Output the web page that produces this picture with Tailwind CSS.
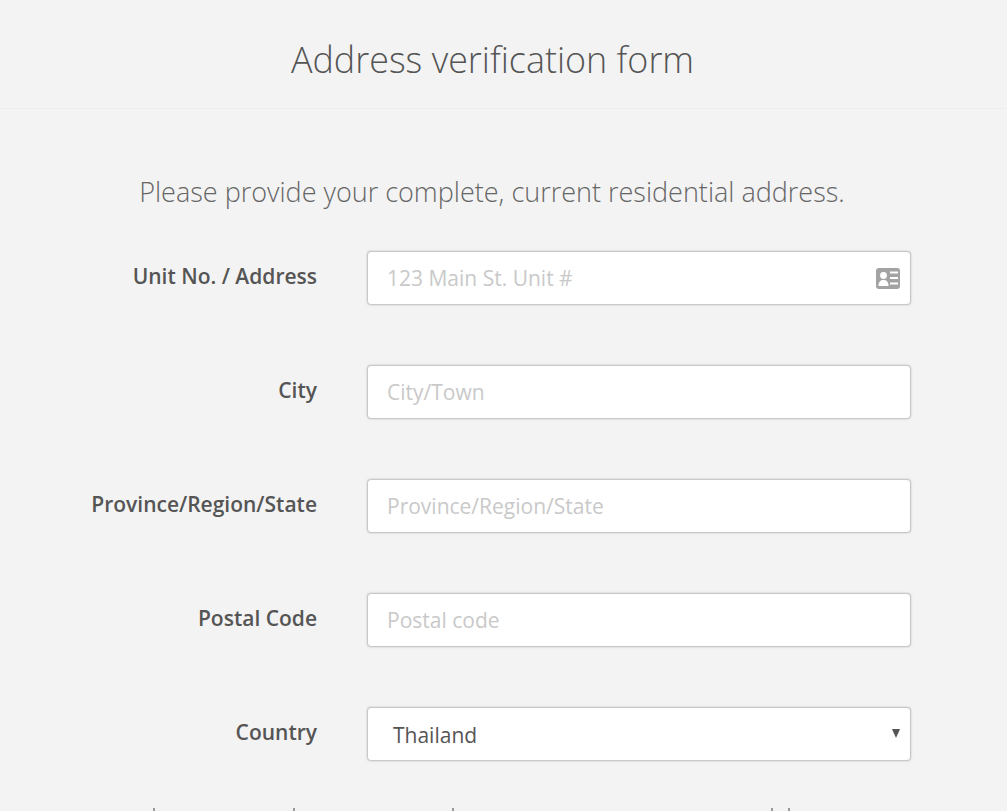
<!DOCTYPE html>
<html lang="en">
  <head>
    <meta charset="UTF-8" />
    <title>Address verification form</title>
    <script src="https://cdn.jsdelivr.net/npm/@tailwindcss/browser@4"></script>
  </head>
  <body class="bg-[#f3f3f3] font-['Open_Sans',sans-serif] text-[#555] h-[811px] overflow-hidden">
    <!-- header -->
    <div class="h-[109px] border-b border-[#eeeeee] flex items-center justify-center pt-[12px] pr-[22px]">
      <h1 class="text-[35.9px] font-light leading-none text-[#555]">Address verification form</h1>
    </div>

    <p class="mt-[66px] pr-[23px] text-center text-[27px] leading-[34px] font-light text-[#666]">
      Please provide your complete, current residential address.
    </p>

    <form class="mt-[42px] flex flex-col gap-[60px]">
      <div class="flex items-center">
        <label class="w-[317px] text-right text-[21px] font-semibold pb-[3px]">Unit No. / Address</label>
        <div class="relative ml-[50px]">
          <input
            type="text"
            placeholder="123 Main St. Unit #"
            class="block w-[544px] h-[54px] bg-white border border-[#c8c8c8] rounded-[4px] shadow-[0_0_2px_#bbb] px-[19px] text-[21px] placeholder:text-[#c9c9c9]"
          />
          <svg class="absolute right-[11px] top-[17px]" width="24" height="21" viewBox="0 0 24 21">
            <rect width="24" height="21" rx="3" fill="#a3a3a3" />
            <circle cx="7.500" cy="7.500" r="3.400" fill="#fff" />
            <path d="M2.500 18c0-4.200 2-6 5-6s5 1.800 5 6z" fill="#fff" />
            <path d="M14 4.500h8M14 10h8M14 15.500h8" stroke="#fff" stroke-width="2" />
          </svg>
        </div>
      </div>

      <div class="flex items-center">
        <label class="w-[317px] text-right text-[21px] font-semibold pb-[3px]">City</label>
        <input
          type="text"
          placeholder="City/Town"
          class="ml-[50px] w-[544px] h-[54px] bg-white border border-[#c8c8c8] rounded-[4px] shadow-[0_0_2px_#bbb] px-[19px] text-[21px] placeholder:text-[#c9c9c9]"
        />
      </div>

      <div class="flex items-center">
        <label class="w-[317px] text-right text-[21px] font-semibold pb-[3px]">Province/Region/State</label>
        <input
          type="text"
          placeholder="Province/Region/State"
          class="ml-[50px] w-[544px] h-[54px] bg-white border border-[#c8c8c8] rounded-[4px] shadow-[0_0_2px_#bbb] px-[19px] text-[21px] placeholder:text-[#c9c9c9]"
        />
      </div>

      <div class="flex items-center">
        <label class="w-[317px] text-right text-[21px] font-semibold pb-[3px]">Postal Code</label>
        <input
          type="text"
          placeholder="Postal code"
          class="ml-[50px] w-[544px] h-[54px] bg-white border border-[#c8c8c8] rounded-[4px] shadow-[0_0_2px_#bbb] px-[19px] text-[21px] placeholder:text-[#c9c9c9]"
        />
      </div>

      <div class="flex items-center">
        <label class="w-[317px] text-right text-[21px] font-semibold pb-[3px]">Country</label>
        <div class="relative ml-[50px]">
          <div class="w-[544px] h-[54px] bg-white border border-[#c8c8c8] rounded-[4px] shadow-[0_0_2px_#bbb] pl-[25px] text-[21px] leading-[54px]">Thailand</div>
          <span class="absolute right-[11px] top-[22px] w-0 h-0 border-x-[4px] border-x-transparent border-t-[9px] border-t-[#555]"></span>
        </div>
      </div>
    </form>

    <!-- tops of the next line, cut off by the window -->
    <div class="mt-[47px] flex h-[3px]">
      <span class="ml-[153px] w-[2px] bg-[#999]"></span>
      <span class="ml-[138px] w-[2px] bg-[#999]"></span>
      <span class="ml-[157px] w-[2px] bg-[#999]"></span>
      <span class="ml-[317px] w-[2px] bg-[#999]"></span>
      <span class="ml-[15px] w-[2px] bg-[#999]"></span>
    </div>
  </body>
</html>
